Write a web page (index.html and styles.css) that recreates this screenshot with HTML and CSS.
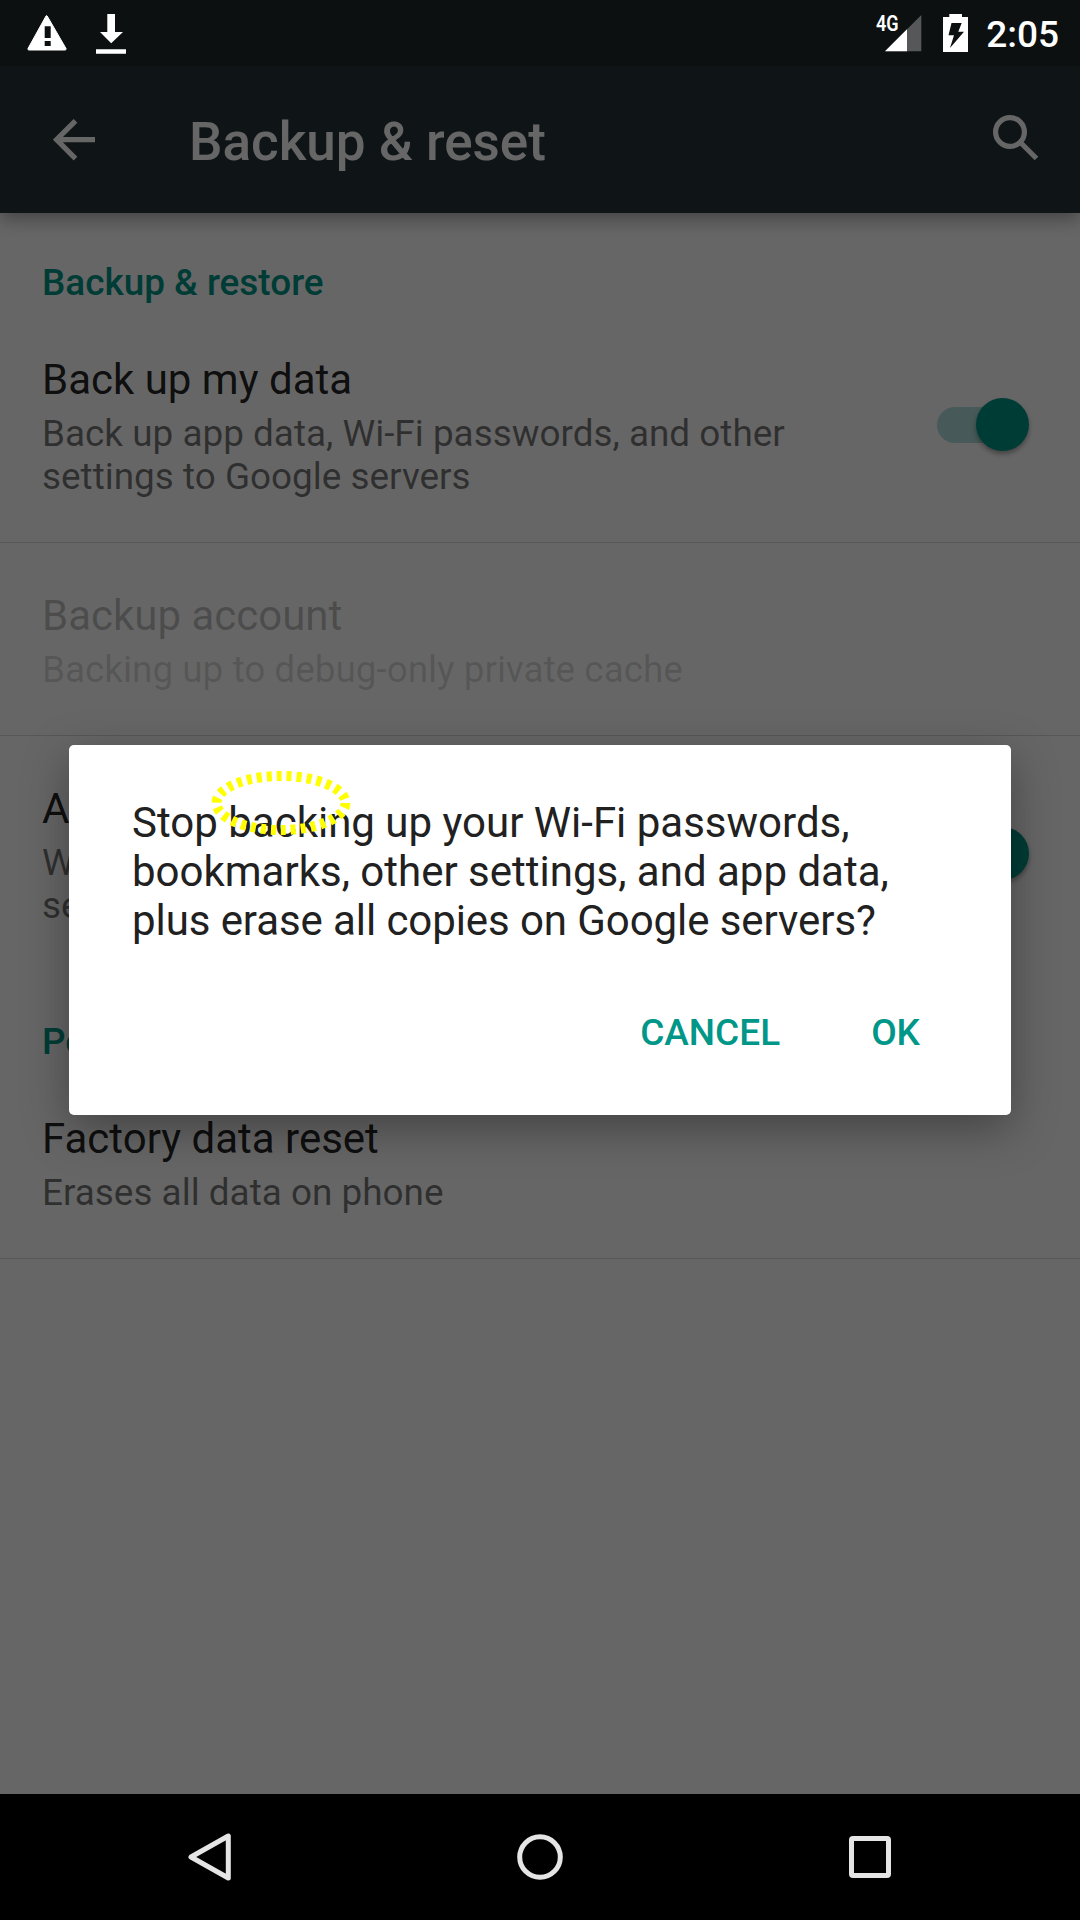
FILE: index.html
```html
<!DOCTYPE html>
<html lang="en">
<head>
<meta charset="utf-8">
<title>Backup &amp; reset</title>
<link rel="stylesheet" href="styles.css">
</head>
<body>
<div class="phone">
  <header class="status">
    <svg class="status-left" width="130" height="66" viewBox="0 0 130 66">
      <path d="M47.200 16 L66 48.500 Q66.500 50 65 50 H29 Q27.500 50 28 48.500 L46 16 Q46.600 15 47.200 16 Z" fill="#fff" stroke="#fff" stroke-width="1" stroke-linejoin="round"/>
      <path d="M44.700 26.300 h6 v11.700 h-6 Z M44.700 41 h6 v5 h-6 Z" fill="#0c1011"/>
      <path d="M107.300 14 h7.700 v18 h8 L111.200 43.300 L100 32 h7.300 Z M96 49.300 h30 v4.400 h-30 Z" fill="#fff"/>
    </svg>
    <div class="status-right">
      <span class="network">4G</span>
      <svg class="signal" width="37" height="37" viewBox="0 0 37 37">
        <path d="M36.300 0 V36.300 H0 Z" fill="#555758"/>
        <path d="M22 14.300 V36.300 H0 Z" fill="#fff"/>
      </svg>
      <svg class="battery" width="25" height="38" viewBox="0 0 25 38">
        <path d="M6.300 0 H19 V3 H25 V38 H0 V3 H6.300 Z" fill="#fff"/>
        <path d="M8.500 9 H18.700 L15.300 17.800 H21 L7 34 L11 21.300 H5.500 Z" fill="#0c1011"/>
      </svg>
      <span class="clock">2:05</span>
    </div>
  </header>
  <div class="screen">
    <div class="toolbar">
      <svg class="back" width="43" height="42" viewBox="0 0 43 42">
        <path d="M42 20.700 H4 M22.500 1.800 L3.600 20.700 L22.500 39.600" fill="none" stroke="#fff" stroke-width="5.200"/>
      </svg>
      <h1 class="title">Backup &amp; reset</h1>
      <svg class="search" width="46" height="46" viewBox="0 0 46 46">
        <circle cx="17" cy="17" r="14.400" fill="none" stroke="#fff" stroke-width="5.200"/>
        <path d="M28.500 28.500 L43.500 43.500" fill="none" stroke="#fff" stroke-width="5.200"/>
      </svg>
    </div>
    <main class="list">
      <h2 class="section">Backup &amp; restore</h2>
      <div class="row">
        <div class="texts">
          <div class="name">Back up my data</div>
          <div class="summary">Back up app data, Wi-Fi passwords, and other<br>settings to Google servers</div>
        </div>
        <div class="switch"><div class="thumb"></div></div>
      </div>
      <div class="row disabled">
        <div class="texts">
          <div class="name">Backup account</div>
          <div class="summary">Backing up to debug-only private cache</div>
        </div>
      </div>
      <div class="row last">
        <div class="texts">
          <div class="name">A</div>
          <div class="summary">W<br>se</div>
        </div>
        <div class="switch"><div class="thumb"></div></div>
      </div>
      <h2 class="section personal">Pe</h2>
      <div class="row">
        <div class="texts">
          <div class="name">Factory data reset</div>
          <div class="summary">Erases all data on phone</div>
        </div>
      </div>
    </main>
  </div>
  <nav class="nav">
    <svg width="52" height="52" viewBox="0 0 52 52"><path d="M44.300 5 V47 L7 26 Z" fill="none" stroke="#e5e5e5" stroke-width="5" stroke-linejoin="round"/></svg>
    <svg width="52" height="52" viewBox="0 0 52 52"><circle cx="26" cy="26" r="20.300" fill="none" stroke="#e5e5e5" stroke-width="5"/></svg>
    <svg width="52" height="52" viewBox="0 0 52 52"><rect x="7.500" y="7.500" width="37" height="37" rx="1.500" fill="none" stroke="#e5e5e5" stroke-width="5"/></svg>
  </nav>
  <div class="scrim">
    <div class="dialog">
      <p class="message">Stop backing up your Wi-Fi passwords,<br>bookmarks, other settings, and app data,<br><span class="tight">plus erase all copies on Google servers?</span></p>
      <div class="actions"><span>CANCEL</span><span>OK</span></div>
      <svg class="marker" width="144" height="70" viewBox="0 0 144 70">
        <ellipse cx="72" cy="35" rx="64.500" ry="27" fill="none" stroke="#ff0" stroke-width="10" stroke-dasharray="5 5"/>
      </svg>
    </div>
  </div>
</div>
</body>
</html>
```
FILE: styles.css
```css
* { box-sizing: border-box; }
body { margin: 0; font-family: Roboto, "Noto Sans", sans-serif; }
.phone {
  position: relative;
  display: flex;
  flex-direction: column;
  width: 1080px;
  height: 1920px;
  overflow: hidden;
  background: #000;
}
.status {
  position: relative;
  z-index: 2;
  display: flex;
  justify-content: space-between;
  height: 66px;
  background: #0c1011;
  color: #fff;
}
.status svg { display: block; }
.status-right { display: flex; padding-right: 21px; }
.network {
  margin: 13px -14px 0 0;
  width: 23px;
  font-size: 22px;
  line-height: 22px;
  font-weight: 600;
  transform: scaleX(.82);
  transform-origin: left;
}
.signal { margin: 15px 21px 0 0; }
.battery { margin: 14px 18px 0 0; }
.clock { font-size: 37px; line-height: 43px; font-weight: 500; margin-top: 13px; }
.screen { flex: 1; background: #fff; }
.toolbar {
  position: relative;
  display: flex;
  align-items: flex-start;
  height: 147px;
  padding: 0 41px 0 53px;
  background: #263238;
  box-shadow: 0 6px 18px rgba(0, 0, 0, .35);
}
.back { margin-top: 53px; }
.title {
  flex: 1;
  margin: 45px 0 0 93px;
  font-size: 53px;
  line-height: 62px;
  font-weight: 500;
  color: #fff;
}
.search { margin-top: 49px; }
.section {
  margin: 0;
  padding: 48px 42px 0;
  font-size: 36.9px;
  line-height: 43px;
  font-weight: 500;
  color: #009688;
}
.row {
  display: flex;
  padding: 51px 42px 44px;
  border-bottom: 1px solid #dadada;
}
.row + .row { padding-top: 48px; }
.row.last { border-bottom: 0; }
.section.personal { padding-top: 49px; }
.texts { flex: 1; }
.name { font-size: 42px; line-height: 49px; color: rgba(0, 0, 0, .87); }
.summary { margin-top: 8px; font-size: 36.9px; line-height: 43px; color: rgba(0, 0, 0, .54); }
.disabled .name { color: rgba(0, 0, 0, .26); }
.disabled .summary { color: rgba(0, 0, 0, .16); }
.switch {
  width: 88px;
  height: 36px;
  margin: 52px 13px 0 0;
  border-radius: 18px;
  background: rgba(0, 150, 136, .3);
}
.thumb {
  width: 53px;
  height: 53px;
  margin: -9px 0 0 39px;
  border-radius: 50%;
  background: #009688;
  box-shadow: 0 3px 5px rgba(0, 0, 0, .35);
}
.nav {
  position: relative;
  z-index: 2;
  display: flex;
  justify-content: space-between;
  align-items: center;
  height: 126px;
  padding: 0 184px;
  background: #000;
}
.scrim {
  position: absolute;
  inset: 0;
  z-index: 1;
  background: rgba(0, 0, 0, .6);
  padding: 745px 69px 0;
}
.dialog {
  position: relative;
  height: 370px;
  padding: 53px 63px 0;
  border-radius: 5px;
  background: #fff;
  box-shadow: 0 14px 46px rgba(0, 0, 0, .34);
}
.message { margin: 0; font-size: 42px; line-height: 49px; color: #212121; }
.tight { letter-spacing: -.08px; }
.actions {
  display: flex;
  justify-content: flex-end;
  gap: 91px;
  margin-top: 66px;
  padding-right: 28px;
  font-size: 37px;
  line-height: 43px;
  font-weight: 500;
  color: #009688;
}
.marker { position: absolute; left: 140px; top: 23px; }
```
